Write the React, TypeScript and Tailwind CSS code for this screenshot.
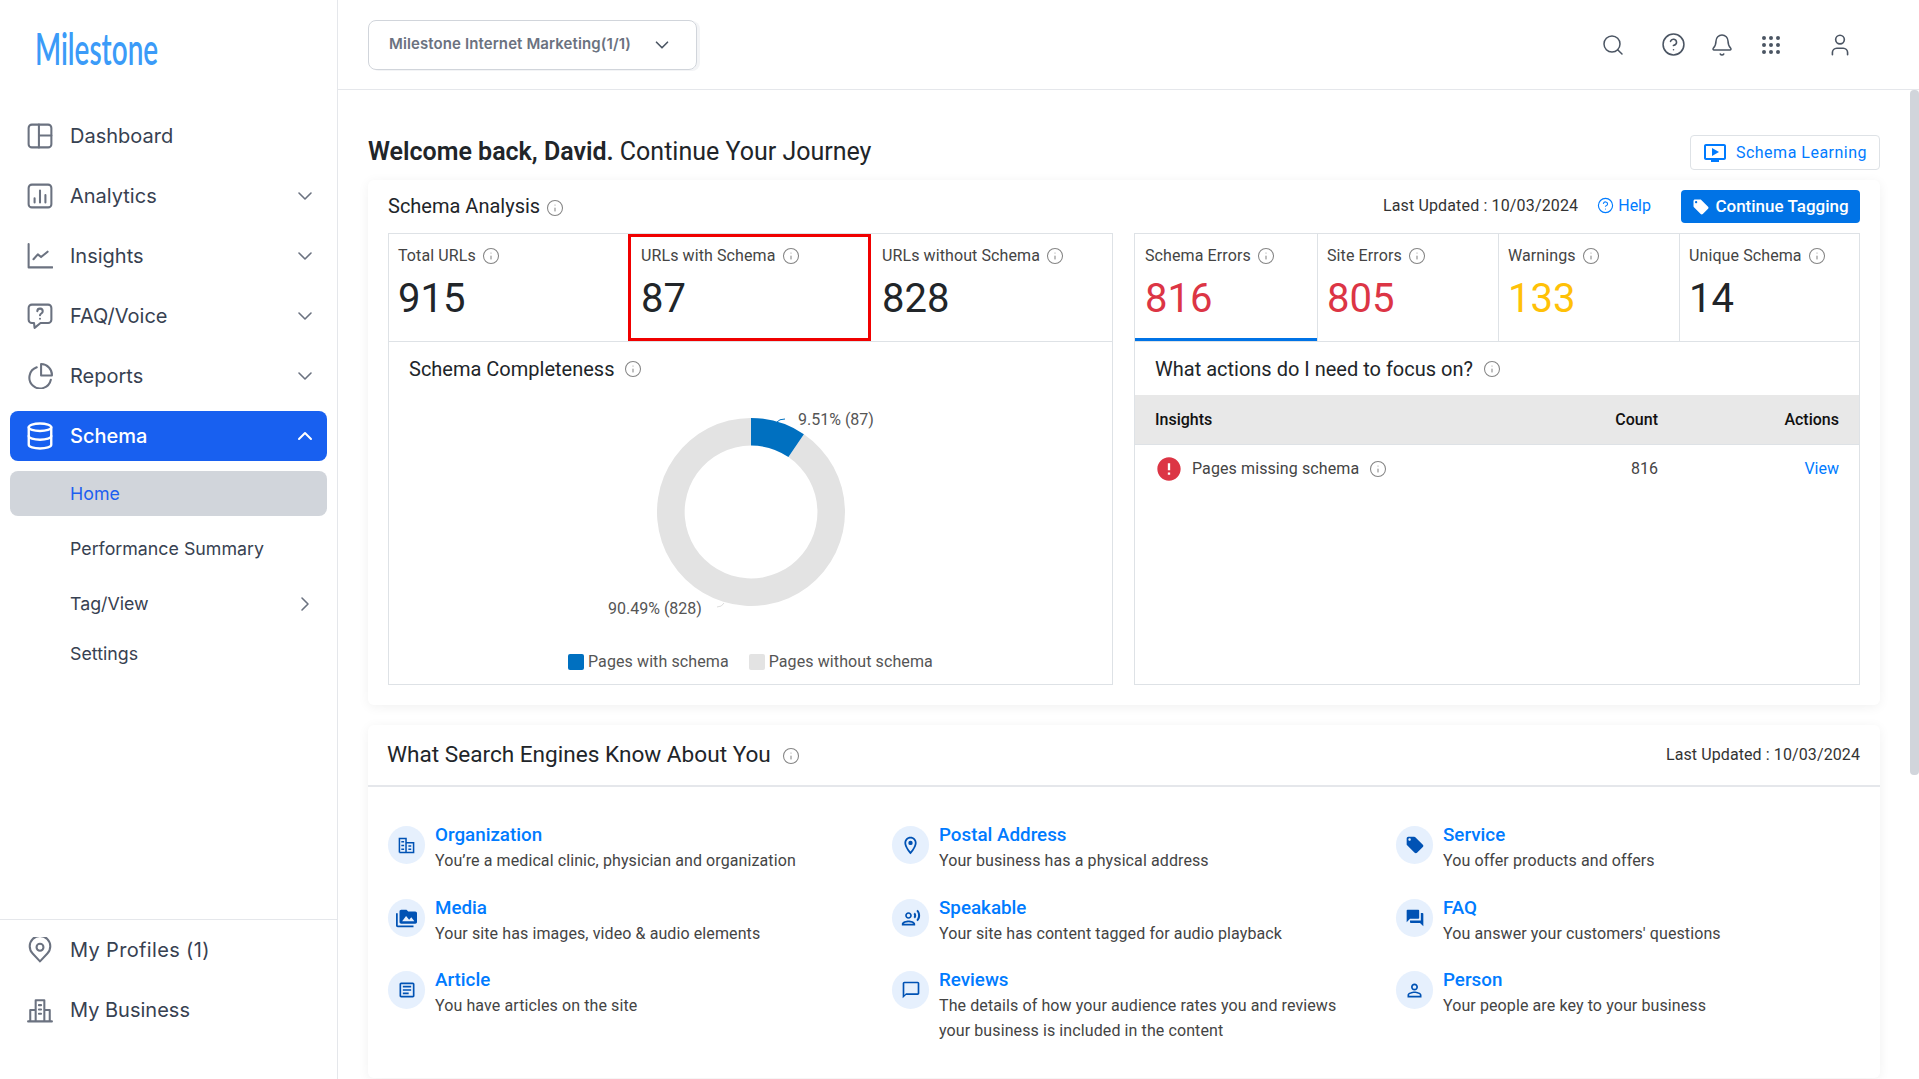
import { useState, type ReactNode } from 'react';
import { ChevronDown, ChevronRight, ChevronUp, CircleHelp, Bell, Grip, Info, Search, Database, User } from 'lucide-react';
import {
  MdChatBubbleOutline,
  MdError,
  MdLocalOffer,
  MdOutlineArticle,
  MdOutlineLocationOn,
  MdOutlineOndemandVideo,
  MdOutlinePersonOutline,
  MdOutlineRecordVoiceOver,
  MdPermMedia,
  MdQuestionAnswer,
} from 'react-icons/md';

function NavSvg({ children }: { children: ReactNode }) {
  return (
    <svg width="26" height="26" viewBox="0 0 24 24" fill="none" stroke="currentColor" strokeWidth="1.9" strokeLinecap="round" strokeLinejoin="round">
      {children}
    </svg>
  );
}

function OrganizationIcon() {
  return (
    <svg width="17" height="17" viewBox="0 0 18 18" fill="none" stroke="currentColor" strokeWidth="1.6">
      <path d="M1.5 16.5V1.5h7v15M8.5 6h8v10.5h-15" />
      <path d="M3.5 5h3M3.5 9h3M3.5 13h3M11 9.5h3M11 13h3" />
    </svg>
  );
}

const navItems: { label: string; icon: ReactNode; chevron?: boolean }[] = [
  {
    label: 'Dashboard',
    icon: (
      <NavSvg>
        <rect x="1.5" y="1.5" width="21" height="21" rx="3" />
        <path d="M11 1.5v21M11 11.5h11.5" />
      </NavSvg>
    ),
  },
  {
    label: 'Analytics',
    chevron: true,
    icon: (
      <NavSvg>
        <rect x="1.5" y="1.5" width="21" height="21" rx="3" />
        <path d="M7 18v-4M12 18V7M17 18v-7" />
      </NavSvg>
    ),
  },
  {
    label: 'Insights',
    chevron: true,
    icon: (
      <NavSvg>
        <path d="M1.5 1v21.5h22" />
        <path d="M6 15l4-4.5 3 2.5 6-5" />
      </NavSvg>
    ),
  },
  {
    label: 'FAQ/Voice',
    chevron: true,
    icon: (
      <NavSvg>
        <path d="M4.5 1.5h15a3 3 0 0 1 3 3v11a3 3 0 0 1-3 3h-7L7 23l-.5-4.500h-2a3 3 0 0 1-3-3v-11a3 3 0 0 1 3-3z" />
        <path d="M9.500 7.500a2.500 2.500 0 0 1 5 .4c0 1.600-2.500 1.900-2.500 3.300M12 14.500v.01" />
      </NavSvg>
    ),
  },
  {
    label: 'Reports',
    chevron: true,
    icon: (
      <NavSvg>
        <path d="M9 4A10 10 0 1 0 22 15.500" />
        <path d="M13 1a10 10 0 0 1 10 10.500H13z" />
      </NavSvg>
    ),
  },
];

const subItems = [
  { label: 'Performance Summary', className: 'mt-[10px]' },
  { label: 'Tag/View', className: 'mt-[10px]', chevron: true },
  { label: 'Settings', className: 'mt-[5px]' },
];

const leftStats = [
  { label: 'Total URLs', value: '915', className: 'pl-[9px]' },
  { label: 'URLs with Schema', value: '87', outlined: true },
  { label: 'URLs without Schema', value: '828', className: 'pl-[11px]' },
];

const rightStats = [
  { label: 'Schema Errors', value: '816', color: 'text-[#dc3545]', active: true },
  { label: 'Site Errors', value: '805', color: 'text-[#dc3545]' },
  { label: 'Warnings', value: '133', color: 'text-[#ffc107]' },
  { label: 'Unique Schema', value: '14', color: 'text-[#212529]' },
];

const schemaTypes: { title: string; lines: string[]; icon: ReactNode }[] = [
  { title: 'Organization', lines: ['You’re a medical clinic, physician and organization'], icon: <OrganizationIcon /> },
  { title: 'Postal Address', lines: ['Your business has a physical address'], icon: <MdOutlineLocationOn size={21} /> },
  { title: 'Service', lines: ['You offer products and offers'], icon: <MdLocalOffer size={20} /> },
  { title: 'Media', lines: ['Your site has images, video & audio elements'], icon: <MdPermMedia size={21} /> },
  { title: 'Speakable', lines: ['Your site has content tagged for audio playback'], icon: <MdOutlineRecordVoiceOver size={20} /> },
  { title: 'FAQ', lines: ["You answer your customers' questions"], icon: <MdQuestionAnswer size={20} /> },
  { title: 'Article', lines: ['You have articles on the site'], icon: <MdOutlineArticle size={20} /> },
  {
    title: 'Reviews',
    lines: ['The details of how your audience rates you and reviews', 'your business is included in the content'],
    icon: <MdChatBubbleOutline size={20} />,
  },
  { title: 'Person', lines: ['Your people are key to your business'], icon: <MdOutlinePersonOutline size={21} /> },
];

function InfoDot({ className = '' }: { className?: string }) {
  return <Info size={18} strokeWidth={1.4} className={`shrink-0 text-[#858585] ${className}`} />;
}

function StatCell({
  label,
  value,
  color = 'text-[#212529]',
  outlined,
  active,
  className = 'pl-[10px]',
}: {
  label: string;
  value: string;
  color?: string;
  outlined?: boolean;
  active?: boolean;
  className?: string;
}) {
  return (
    <div
      className={`relative h-[107px] pt-[11px] ${className} ${active ? 'border-b-[3px] border-b-[#0073e6]' : ''} ${
        outlined ? '-ml-[2px] pl-[13px] outline-[3px] -outline-offset-[3px] outline-[#f00000]' : ''
      }`}
    >
      <div className="flex items-center gap-[6px] text-[16px] leading-[22px] tracking-[0.1px] text-[#444]">
        {label}
        <InfoDot />
      </div>
      <div className={`mt-[8px] text-[40px] leading-[48px] ${color}`}>{value}</div>
    </div>
  );
}

function CompletenessChart() {
  return (
    <svg width="723" height="250" viewBox="0 0 723 250" className="block">
      <path d="M414.900 39.300A94 94 0 1 1 362 23L362 50.600A66.400 66.400 0 1 0 399.400 62.100Z" fill="#e3e3e3" />
      <path d="M362 23A94 94 0 0 1 414.900 39.300L399.400 62.100A66.400 66.400 0 0 0 362 50.600Z" fill="#0070c0" />
      <path d="M388 27Q390 24 396 24" fill="none" stroke="#0070c0" strokeWidth="1" />
      <path d="M328 212Q333 212 335 208" fill="none" stroke="#dddddd" strokeWidth="1" />
      <text x="409" y="30" fontSize="16" fill="#555555">9.51% (87)</text>
      <text x="219" y="219" fontSize="16" fill="#555555">90.49% (828)</text>
    </svg>
  );
}

export default function App() {
  const [selected] = useState('Milestone Internet Marketing(1/1)');

  return (
    <div className="flex h-screen w-full overflow-hidden bg-white font-['Roboto',sans-serif] text-[#212529]">
      <aside className="flex w-[338px] shrink-0 flex-col border-r border-[#e5e7eb] font-['Inter',sans-serif] text-[#374151]">
        <div className="h-[111px] pl-[35px] pt-[20px]">
          <span className="inline-block origin-left scale-x-[0.62] font-['Lato',sans-serif] text-[45px] font-semibold leading-[56px] text-[#3b9bf8]">Milestone</span>
        </div>

        <nav className="flex flex-col px-[10px]">
          {navItems.map((item) => (
            <div key={item.label} className="mb-[10px] flex h-[50px] items-center pl-[17px] pr-[10px] text-[20px]">
              <span className="text-[#6b7280]">{item.icon}</span>
              <span className="ml-[17px] flex-1">{item.label}</span>
              {item.chevron && <ChevronDown size={24} strokeWidth={1.6} className="text-[#6b7280]" />}
            </div>
          ))}
          <div className="flex h-[50px] items-center rounded-[8px] bg-[#1860f0] pl-[15px] pr-[10px] text-[20px] font-medium text-white">
            <Database size={30} strokeWidth={1.9} />
            <span className="ml-[15px] flex-1">Schema</span>
            <ChevronUp size={24} strokeWidth={2} />
          </div>
          <div className="mt-[10px] flex h-[45px] items-center rounded-[8px] bg-[#d1d5db] pl-[60px] pt-[1px] text-[17.8px] text-[#1d5ff0]">Home</div>
          {subItems.map((item) => (
            <div key={item.label} className={`flex h-[45px] items-center pl-[60px] pr-[10px] pt-[1px] text-[17.8px] ${item.className}`}>
              <span className="flex-1">{item.label}</span>
              {item.chevron && <ChevronRight size={24} strokeWidth={1.6} className="text-[#6b7280]" />}
            </div>
          ))}
        </nav>

        <div className="mt-auto flex flex-col gap-[10px] border-t border-[#e5e7eb] px-[10px] pb-[44px] pt-[5px]">
          <div className="flex h-[50px] items-center pl-[17px] text-[20px]">
            <span className="text-[#6b7280]">
              <NavSvg>
                <path d="M12 22.500l-6.800-7.300a9.500 9.500 0 1 1 13.600 0z" />
                <circle cx="12" cy="9.500" r="3.200" />
              </NavSvg>
            </span>
            <span className="ml-[17px] tracking-[0.35px]">My Profiles (1)</span>
          </div>
          <div className="flex h-[50px] items-center pl-[17px] text-[20px]">
            <span className="text-[#6b7280]">
              <NavSvg>
                <path d="M1 22.500h22M3 22.500V12h5M21 22.500V12h-5M8 22.500V3h8v19.500M11 7.500h2M11 11.500h2M11 15.500h2" />
              </NavSvg>
            </span>
            <span className="ml-[17px]">My Business</span>
          </div>
        </div>
      </aside>

      <main className="flex min-w-0 flex-1 flex-col">
        <header className="flex h-[90px] shrink-0 items-center border-b border-[#e5e7eb] pl-[30px] pr-[66px] text-[#4b5563]">
          <button className="flex h-[50px] w-[329px] items-center justify-between rounded-[8px] border border-[#d1d5db] pl-[20px] pr-[23px] font-['Inter',sans-serif] text-[15px] font-semibold tracking-[0.1px] text-[#6b7280] shadow-[3px_1px_0_#f3f4f6]">
            {selected}
            <ChevronDown size={22} strokeWidth={1.8} className="text-[#4b5563]" />
          </button>
          <div className="ml-auto flex items-center">
            <Search size={24} strokeWidth={1.5} />
            <CircleHelp size={25} strokeWidth={1.5} className="ml-[36px]" />
            <Bell size={24} strokeWidth={1.5} className="ml-[24px]" />
            <Grip size={24} strokeWidth={2} className="ml-[25px]" />
            <User size={26} strokeWidth={1.5} className="ml-[44px]" />
          </div>
        </header>

        <div className="flex min-h-0 flex-1">
          <div className="min-w-0 flex-1 overflow-hidden pl-[30px] pr-[29px] pt-[45px]">
            <div className="mb-[10px] flex h-[35px] items-center justify-between">
              <h1 className="-mt-[2px] text-[25px] leading-none">
                <span className="font-semibold">Welcome back, David.</span> Continue Your Journey
              </h1>
              <button className="flex h-[35px] w-[190px] items-center justify-center gap-[9px] rounded-[4px] border border-[#dee2e6] text-[16px] tracking-[0.5px] text-[#007bff]">
                <MdOutlineOndemandVideo size={24} />
                Schema Learning
              </button>
            </div>

            <section className="h-[525px] rounded-[6px] bg-white px-[20px] pb-[20px] shadow-[0_2px_12px_rgba(0,0,0,0.06)]">
              <div className="flex h-[53px] items-center">
                <h2 className="-mt-[2px] text-[20px]">Schema Analysis</h2>
                <InfoDot className="ml-[6px] mt-[2px]" />
                <div className="-mt-[2px] ml-auto text-[16px] tracking-[0.15px] text-[#333]">Last Updated : 10/03/2024</div>
                <a className="-mt-[2px] ml-[19px] flex items-center gap-[4px] text-[16px] text-[#007bff]">
                  <CircleHelp size={17} strokeWidth={1.6} />
                  Help
                </a>
                <button className="ml-[30px] flex h-[33px] w-[179px] items-center justify-center gap-[5px] rounded-[4px] bg-[#0073e6] text-[17px] font-medium text-white">
                  <MdLocalOffer size={18} />
                  Continue Tagging
                </button>
              </div>

              <div className="grid h-[452px] grid-cols-[725px_726px] gap-[21px]">
                <div className="flex flex-col border border-[#dee2e6]">
                  <div className="grid grid-cols-3 border-b border-[#dee2e6]">
                    {leftStats.map((stat) => (
                      <StatCell key={stat.label} {...stat} />
                    ))}
                  </div>
                  <div className="flex h-[53px] items-center gap-[10px] pl-[20px] text-[20px]">
                    Schema Completeness
                    <InfoDot />
                  </div>
                  <CompletenessChart />
                  <div className="mt-[6px] flex items-center pl-[179px] text-[16px] leading-[22px] tracking-[0.1px] text-[#555]">
                    <span className="mr-[4px] h-[16px] w-[16px] rounded-[2px] bg-[#0070c0]" />
                    Pages with schema
                    <span className="ml-[20px] mr-[4px] h-[16px] w-[16px] rounded-[2px] bg-[#e3e3e3]" />
                    Pages without schema
                  </div>
                </div>

                <div className="flex flex-col border border-[#dee2e6]">
                  <div className="grid grid-cols-[182px_181px_181px_1fr] border-b border-[#dee2e6]">
                    {rightStats.map((stat, i) => (
                      <StatCell key={stat.label} {...stat} className={i > 0 ? 'border-l border-[#dee2e6] pl-[9px]' : 'pl-[10px]'} />
                    ))}
                  </div>
                  <div className="flex h-[53px] items-center gap-[10px] pl-[20px] text-[20px]">
                    What actions do I need to focus on?
                    <InfoDot />
                  </div>
                  <div className="flex h-[50px] items-center border-b border-[#dee2e6] bg-[#e8e8e8] px-[20px] text-[16px] font-medium text-[#111]">
                    <span className="flex-1">Insights</span>
                    <span className="w-[100px] text-right">Count</span>
                    <span className="w-[181px] text-right">Actions</span>
                  </div>
                  <div className="flex h-[47px] items-center pl-[20px] pr-[20px] text-[16px] text-[#444]">
                    <MdError size={28} className="text-[#dc3545]" />
                    <span className="ml-[9px] tracking-[0.1px]">Pages missing schema</span>
                    <InfoDot className="ml-[10px]" />
                    <span className="ml-auto w-[100px] text-right">816</span>
                    <a className="w-[181px] text-right text-[#007bff]">View</a>
                  </div>
                </div>
              </div>
            </section>

            <section className="mt-[20px] h-[353px] rounded-[6px] bg-white shadow-[0_2px_12px_rgba(0,0,0,0.06)]">
              <div className="flex h-[62px] items-center border-b-2 border-[#e5e7eb] pb-[1px] pl-[19px] pr-[20px]">
                <h2 className="text-[22.6px]">What Search Engines Know About You</h2>
                <InfoDot className="ml-[11px] mt-[2px]" />
                <div className="ml-auto text-[16px] tracking-[0.1px] text-[#333]">Last Updated : 10/03/2024</div>
              </div>
              <div className="grid grid-cols-[504px_504px_1fr] grid-rows-[73px_72px_auto] pl-[20px] pr-[20px] pt-[39px]">
                {schemaTypes.map((item) => (
                  <div key={item.title} className="flex gap-[10px]">
                    <span className="flex h-[38px] w-[37px] shrink-0 items-center justify-center rounded-full bg-[#e6f0fd] text-[#0052b4]">{item.icon}</span>
                    <div className="-mt-[1px]">
                      <div className="text-[18.8px] font-medium leading-[20px] text-[#007bff]">{item.title}</div>
                      <div className="mt-[3px] text-[16px] leading-[25px] tracking-[0.1px] text-[#444]">
                        {item.lines.map((line) => (
                          <div key={line}>{line}</div>
                        ))}
                      </div>
                    </div>
                  </div>
                ))}
              </div>
            </section>
          </div>

          <div className="w-[10px] shrink-0 bg-white pl-[1px]">
            <div className="h-[685px] rounded-[4px] bg-[#d1d5db]" />
          </div>
        </div>
      </main>
    </div>
  );
}
